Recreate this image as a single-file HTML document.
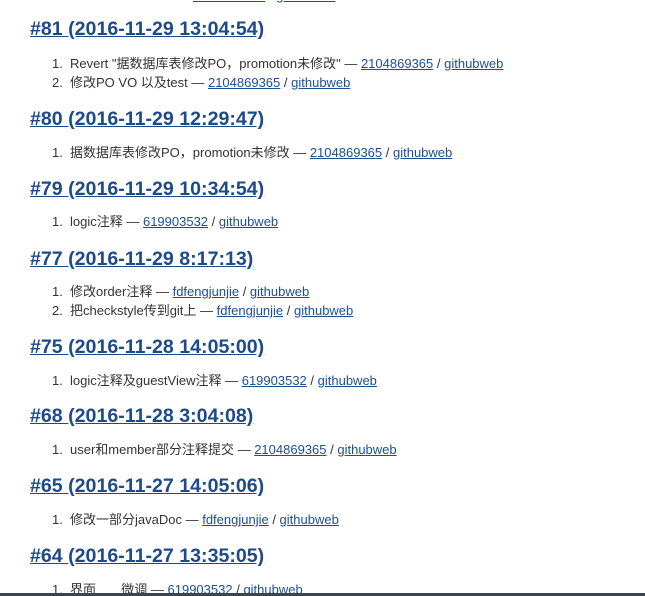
<!DOCTYPE html>
<html><head><meta charset="utf-8"><style>
html,body{margin:0;padding:0;width:645px;height:596px;overflow:hidden;background:#fff;position:relative;font-family:"Liberation Sans","Noto Sans CJK SC",sans-serif}
.h{position:absolute;left:30px;font-size:19.6px;font-weight:bold;color:#1f4a8a;text-decoration:underline;line-height:24px;white-space:nowrap;margin-top:1px}
.i{position:absolute;left:52px;font-size:13px;color:#333;line-height:16px;white-space:nowrap}
.i span.n{display:inline-block;width:18px}
a{color:#1c4f94;text-decoration:underline}
.bar{position:absolute;left:0;right:0;bottom:0;height:3px;background:#3c4450}
</style></head><body>
<div class="i" style="top:-12px;left:193px"><a>2104869365</a> / <a>githubweb</a></div>
<div class="h" style="top:16px">#81 (2016-11-29 13:04:54)</div>
<div class="i" style="top:56px"><span class="n">1.</span>Revert "据数据库表修改PO，promotion未修改" — <a>2104869365</a> / <a>githubweb</a></div>
<div class="i" style="top:75px"><span class="n">2.</span>修改PO VO 以及test — <a>2104869365</a> / <a>githubweb</a></div>
<div class="h" style="top:106px">#80 (2016-11-29 12:29:47)</div>
<div class="i" style="top:145px"><span class="n">1.</span>据数据库表修改PO，promotion未修改 — <a>2104869365</a> / <a>githubweb</a></div>
<div class="h" style="top:176px">#79 (2016-11-29 10:34:54)</div>
<div class="i" style="top:214px"><span class="n">1.</span>logic注释 — <a>619903532</a> / <a>githubweb</a></div>
<div class="h" style="top:246px">#77 (2016-11-29 8:17:13)</div>
<div class="i" style="top:284px"><span class="n">1.</span>修改order注释 — <a>fdfengjunjie</a> / <a>githubweb</a></div>
<div class="i" style="top:303px"><span class="n">2.</span>把checkstyle传到git上 — <a>fdfengjunjie</a> / <a>githubweb</a></div>
<div class="h" style="top:334px">#75 (2016-11-28 14:05:00)</div>
<div class="i" style="top:373px"><span class="n">1.</span>logic注释及guestView注释 — <a>619903532</a> / <a>githubweb</a></div>
<div class="h" style="top:403px">#68 (2016-11-28 3:04:08)</div>
<div class="i" style="top:442px"><span class="n">1.</span>user和member部分注释提交 — <a>2104869365</a> / <a>githubweb</a></div>
<div class="h" style="top:473px">#65 (2016-11-27 14:05:06)</div>
<div class="i" style="top:512px"><span class="n">1.</span>修改一部分javaDoc — <a>fdfengjunjie</a> / <a>githubweb</a></div>
<div class="h" style="top:543px">#64 (2016-11-27 13:35:05)</div>
<div class="i" style="top:582px"><span class="n">1.</span>界面&nbsp;&nbsp;&nbsp;&nbsp;&nbsp;&nbsp;&nbsp;微调 — <a>619903532</a> / <a>githubweb</a></div>
<div class="bar"></div>
</body></html>
